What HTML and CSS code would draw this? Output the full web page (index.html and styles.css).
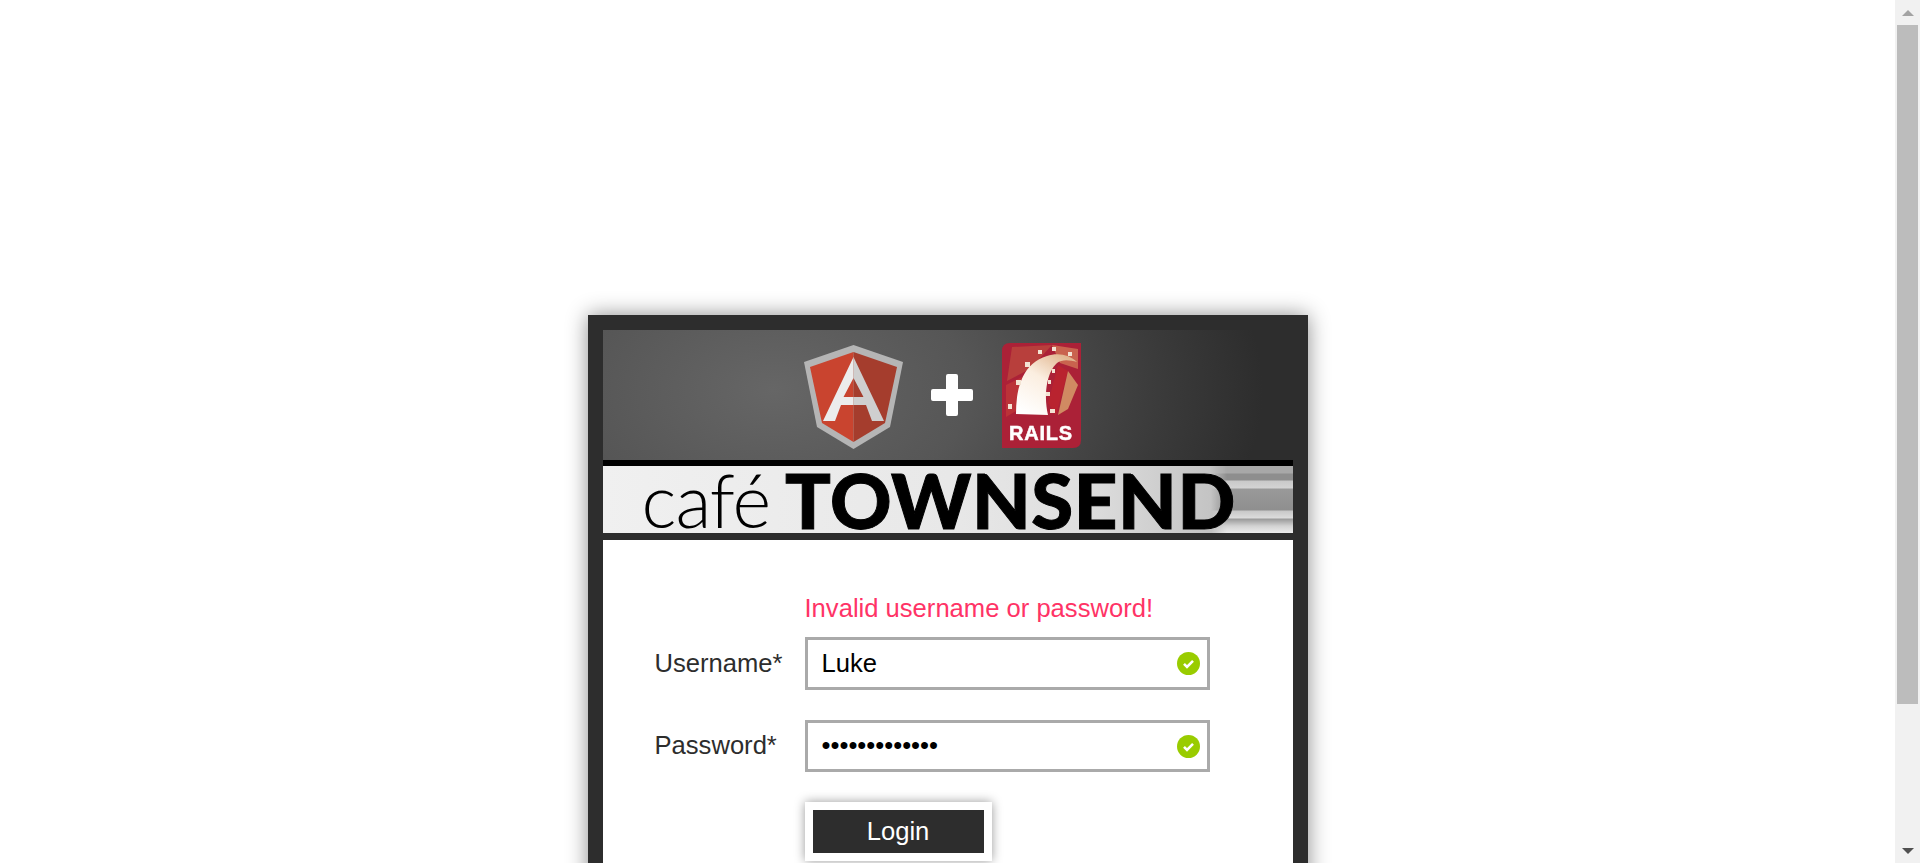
FILE: index.html
```html
<!DOCTYPE html>
<html lang="en">
<head>
    <meta charset="UTF-8">
    <title>Cafe Townsend</title>
    <link rel="stylesheet" href="styles.css">
</head>
<body>
    <div class="page">
        <div class="card">
            <div class="logos">
                <svg class="logo-angular" width="99" height="104" viewBox="0 0 99 104">
                    <polygon points="49.5,0 99,17 86,82 49.5,104 13,82 0,17" fill="#b5b5b5"/>
                    <polygon points="49.5,7 6,22 18,78 49.5,97" fill="#c9442f"/>
                    <polygon points="49.5,7 93,22 81,78 49.5,97" fill="#a53d2d"/>
                    <polygon points="49.5,12 19,76 31,76 37,60 49.5,60 49.5,52 39.5,52 49.5,33" fill="#ececec"/>
                    <polygon points="49.5,12 80,76 68,76 62,60 49.5,60 49.5,52 59.5,52 49.5,33" fill="#cfcfcf"/>
                </svg>
                <svg class="logo-plus" width="42" height="42" viewBox="0 0 42 42">
                    <path d="M15 2 Q15 0 17 0 H25 Q27 0 27 2 V15 H40 Q42 15 42 17 V25 Q42 27 40 27 H27 V40 Q27 42 25 42 H17 Q15 42 15 40 V27 H2 Q0 27 0 25 V17 Q0 15 2 15 H15 Z" fill="#fff"/>
                </svg>
                <svg class="logo-rails" width="79" height="105" viewBox="0 0 79 105">
                    <defs>
                        <linearGradient id="arch" x1="0.2" y1="1" x2="0.8" y2="0">
                            <stop offset="0" stop-color="#fff"/>
                            <stop offset="0.55" stop-color="#fbeee0"/>
                            <stop offset="1" stop-color="#e0b48c"/>
                        </linearGradient>
                    </defs>
                    <path d="M8 0 H79 V97 Q79 105 71 105 H0 V8 Q0 0 8 0 Z" fill="#ab2137"/>
                    <polygon points="10,4 50,2 28,26 5,38" fill="#b83f3c"/>
                    <polygon points="50,2 76,6 76,26 58,20" fill="#c9634e"/>
                    <polygon points="56,22 66,28 54,72 46,60" fill="#b9232f"/>
                    <polygon points="66,28 76,42 66,66 56,72" fill="#d08a62"/>
                    <polygon points="4,42 20,34 14,68 4,74" fill="#bb3238"/>
                    <path d="M14 71 C14 42 22 20 45 13 C56 9 68 12 75 19 C68 17 60 16 55 20 C46 28 41 48 46 72 Z" fill="url(#arch)"/>
                    <g fill="#f3e3d3">
                        <rect x="23" y="19" width="5" height="5"/>
                        <rect x="36" y="7" width="4" height="4"/>
                        <rect x="50" y="4" width="4" height="4"/>
                        <rect x="66" y="9" width="4" height="4"/>
                        <rect x="14" y="37" width="5" height="5"/>
                        <rect x="6" y="61" width="4" height="5"/>
                        <rect x="50" y="26" width="3" height="4"/>
                        <rect x="46" y="37" width="3" height="4"/>
                        <rect x="44" y="49" width="4" height="4"/>
                        <rect x="48" y="66" width="5" height="4"/>
                    </g>
                    <text class="rails-text" x="7" y="97">RAILS</text>
                </svg>
            </div>
            <div class="brand">
                <span class="brand-light">café</span>
                <span class="brand-bold">TOWNSEND</span>
            </div>

            <form class="login-form">
                <div class="error">Invalid username or password!</div>
                <div class="row">
                    <label class="row-label" for="username">Username*</label>
                    <div class="field">
                        <input id="username" class="text-input" type="text" value="Luke">
                        <span class="ok-icon">
                            <svg width="23" height="23" viewBox="0 0 23 23">
                                <circle cx="11.5" cy="11.5" r="11.5" fill="#99cc00"/>
                                <path d="M7 11.8 L10 14.8 L16 8.8" fill="none" stroke="#fff" stroke-width="2.6"/>
                            </svg>
                        </span>
                    </div>
                </div>
                <div class="row">
                    <label class="row-label" for="password">Password*</label>
                    <div class="field">
                        <input id="password" class="text-input" type="password" value="1234567890123">
                        <span class="ok-icon">
                            <svg width="23" height="23" viewBox="0 0 23 23">
                                <circle cx="11.5" cy="11.5" r="11.5" fill="#99cc00"/>
                                <path d="M7 11.8 L10 14.8 L16 8.8" fill="none" stroke="#fff" stroke-width="2.6"/>
                            </svg>
                        </span>
                    </div>
                </div>
                <div class="actions">
                    <button class="login-btn" type="button">Login</button>
                </div>
            </form>
        </div>
    </div>

    <!-- page scrollbar -->
    <div class="scrollbar">
        <span class="arrow-up"></span>
        <div class="thumb"></div>
        <span class="arrow-down"></span>
    </div>
</body>
</html>
```

FILE: styles.css
```css
html, body {
    margin: 0;
    height: 863px;
    overflow: hidden;
}
body {
    display: flex;
    background: #fff;
    font-family: "Liberation Sans", Arial, sans-serif;
}
.page {
    flex: 1;
    height: 863px;
    overflow: hidden;
    padding-top: 315px;
    box-sizing: border-box;
}

/* card */
.card {
    width: 690px;
    margin: 0 auto;
    border: 15px solid #2d2d2d;
    box-shadow: 0 0 20px rgba(0, 0, 0, 0.45);
    background: #fff;
}

/* header logos */
.logos {
    height: 130px;
    display: flex;
    align-items: center;
    justify-content: center;
    padding-right: 11px;
    box-sizing: border-box;
    background: radial-gradient(ellipse 490px 300px at 170px 60px, #666 0%, #565656 40%, #3a3a3a 80%, #2d2d2d 100%);
}
.logo-angular, .logo-plus, .logo-rails {
    display: block;
    filter: blur(0.6px);
}
.logo-angular {
    margin-top: 4px;
}
.logo-plus {
    margin: 0 29px 0 28px;
}
.rails-text {
    font-family: "Liberation Sans", Arial, sans-serif;
    font-weight: bold;
    font-size: 20px;
    letter-spacing: 0.8px;
    fill: #fff;
    stroke: #fff;
    stroke-width: 0.5px;
}

/* cafe townsend band */
.brand {
    position: relative;
    height: 67px;
    border-top: 6px solid #000;
    border-bottom: 7px solid #2d2d2d;
    display: flex;
    align-items: center;
    padding-left: 39px;
    color: #000;
    font-family: Lato, "Open Sans", sans-serif;
    background: linear-gradient(to right, #f0f0f0 0, #e8e8e8 50%, #dedede 70%, #c4c4c4 88%, #b8b8b8 100%);
}
/* streaks on the right end of the band */
.brand::before {
    content: "";
    position: absolute;
    top: 0;
    right: 0;
    bottom: 0;
    width: 82px;
    background: linear-gradient(to bottom, #a8a8a8 0, #a8a8a8 7px, #8e8e8e 8px, #8e8e8e 14px, #c9c9c9 15px, #d4d4d4 22px, #999 23px, #8f8f8f 44px, #c8c8c8 45px, #dcdcdc 52px, #9a9a9a 53px, #d2d2d2 60px, #ececec 67px);
    -webkit-mask-image: linear-gradient(to right, transparent 0, #000 16px);
    mask-image: linear-gradient(to right, transparent 0, #000 16px);
}
.brand-light, .brand-bold {
    position: relative;
    line-height: 67px;
}
.brand-light {
    font-size: 74px;
    font-weight: 300;
    margin-right: 15px;
    letter-spacing: -1px;
}
.brand-bold {
    font-size: 76px;
    font-weight: 900;
    letter-spacing: 0.6px;
    -webkit-text-stroke: 1px #000;
}

/* login form */
.login-form {
    padding: 54px 0 40px 52px;
    color: #2d2d2d;
    font-size: 25.6px;
}
.error {
    margin-left: 150px;
    height: 43px;
    line-height: 29px;
    color: #ff3366;
}
.row {
    display: flex;
    align-items: center;
    margin-bottom: 30px;
}
.row-label {
    width: 150px;
}
.field {
    position: relative;
    width: 405px;
    height: 52.5px;
}
.text-input {
    width: 100%;
    height: 100%;
    box-sizing: border-box;
    border: 3px solid #aaa;
    padding: 0 14px;
    font-family: "Liberation Sans", Arial, sans-serif;
    font-size: 25.6px;
    color: #000;
    background: #fff;
    outline: none;
}
.ok-icon {
    position: absolute;
    right: 10px;
    top: 15px;
    line-height: 0;
}
.actions {
    margin-left: 150px;
}
.login-btn {
    display: block;
    width: 187px;
    height: 59px;
    border: 8px solid #fff;
    background: #2d2d2d;
    color: #fff;
    font-family: "Liberation Sans", Arial, sans-serif;
    font-size: 25.6px;
    padding: 0;
    box-shadow: 0 0 10px rgba(0, 0, 0, 0.4);
}

/* scrollbar */
.scrollbar {
    width: 25px;
    height: 863px;
    background: #f1f1f1;
    display: flex;
    flex-direction: column;
    align-items: center;
    position: relative;
}
.thumb {
    width: 21px;
    height: 679px;
    background: #bcbcbc;
    margin-top: 25px;
}
.arrow-up, .arrow-down {
    position: absolute;
    width: 0;
    height: 0;
    border-left: 6px solid transparent;
    border-right: 6px solid transparent;
}
.arrow-up {
    top: 10px;
    border-bottom: 6px solid #a3a3a3;
}
.arrow-down {
    bottom: 9px;
    border-top: 6px solid #505050;
}
```
